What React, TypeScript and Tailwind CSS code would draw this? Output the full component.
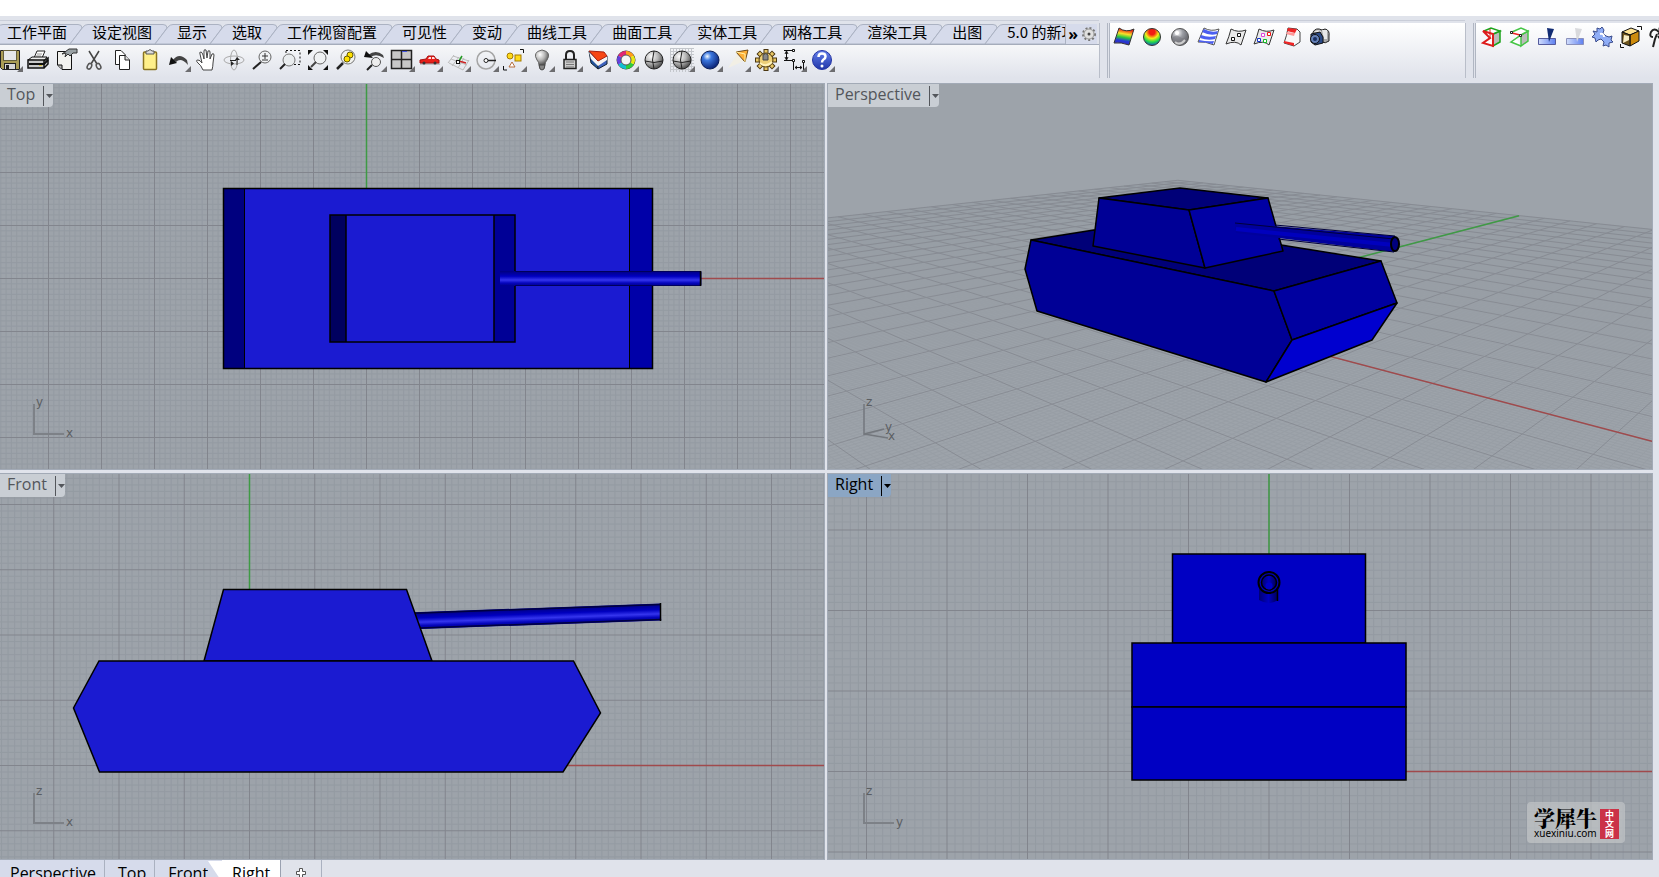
import { Fragment } from 'react';
import type { ReactNode } from 'react';

interface Tool {
  name: string;
  icon: ReactNode;
  flyout?: boolean;
}

interface ViewportProps {
  title: string;
  viewBox: string;
  active?: boolean;
  children: ReactNode;
}

const menuTabs = [
  '工作平面', '设定视图', '显示', '选取', '工作视窗配置', '可见性', '变动',
  '曲线工具', '曲面工具', '实体工具', '网格工具', '渲染工具', '出图', '5.0 的新功能',
];

const gearTeeth = [0, 45, 90, 135, 180, 225, 270, 315];

const shadedSphere = (
  <>
    <circle cx="12" cy="12" r="9" fill="url(#gray-ball)" stroke="#222" />
    <path d="M12 3 Q9 12 12 21 M3 13 Q12 16 21 13" fill="none" stroke="#222" />
  </>
);

const mainTools: Tool[] = [
  {
    name: 'Save', flyout: true, icon: (
      <>
        <path d="M2.500 2.500 H21.500 V21.500 H4.500 L2.500 19.500 Z" fill="#aa9d55" stroke="#222" />
        <rect x="5.500" y="2.500" width="13" height="10" fill="#e5e8ea" stroke="#65603c" />
        <rect x="6.500" y="15.500" width="11" height="6" fill="#d7d7d7" stroke="#222" />
        <rect x="8" y="17" width="3" height="4" fill="#222" />
      </>
    ),
  },
  {
    name: 'Print', icon: (
      <>
        <path d="M8 10 L11 3 H19 L16 10" fill="#fff" stroke="#222" />
        <path d="M11 6 H16 M10 8 H15" stroke="#999" />
        <path d="M2 12 L6 9 H21 L18 13 Z" fill="#eee" stroke="#111" />
        <path d="M2 12 H18 V20 H2 Z M18 13 L22 10 V16 L18 20" fill="#c9c9c9" stroke="#111" strokeWidth="1.500" />
        <path d="M3 16 H18 L22 12" fill="none" stroke="#111" strokeWidth="2" />
        <rect x="13" y="17" width="3" height="1" fill="#d9c541" />
      </>
    ),
  },
  {
    name: 'Document properties', icon: (
      <>
        <path d="M3.500 3.500 H17.500 V21.500 H8 L3.500 17 Z" fill="#f2f2ef" stroke="#111" />
        <path d="M4 17 H8 V21" fill="#bbb" stroke="#111" />
        <path d="M8 6 L15 1 H23 V5 H19 L16 8 L14 6 L11 9 L12 5 Z" fill="#9aa2a5" stroke="#333" />
      </>
    ),
  },
  {
    name: 'Cut', icon: (
      <>
        <path d="M7 3 L15 16 M17 3 L9 16" stroke="#444" strokeWidth="1.500" />
        <ellipse cx="7.500" cy="18" rx="2" ry="3" transform="rotate(30 7 18)" fill="none" stroke="#555" strokeWidth="1.500" />
        <ellipse cx="16.500" cy="18" rx="2" ry="3" transform="rotate(-30 17 18)" fill="none" stroke="#555" strokeWidth="1.500" />
      </>
    ),
  },
  {
    name: 'Copy', icon: (
      <>
        <path d="M5.500 2.500 H11 L15.500 7 V16.500 H5.500 Z" fill="#fff" stroke="#222" />
        <path d="M9.500 7.500 H15 L19.500 12 V21.500 H9.500 Z" fill="#fff" stroke="#222" />
        <path d="M15 7.500 V12 H19.500" fill="#ddd" stroke="#222" />
      </>
    ),
  },
  {
    name: 'Paste', icon: (
      <>
        <rect x="5.500" y="4" width="13" height="17.500" rx="1" fill="#fff08a" stroke="#8a7420" strokeWidth="1.500" />
        <path d="M8 6 V3 H10 Q12 0 14 3 H16 V6 Z" fill="#ddd" stroke="#555" />
      </>
    ),
  },
  {
    name: 'Undo', flyout: true, icon: (
      <>
        <path d="M7 12 Q13 4 21 12 L22 17 Q15 9 10 14" fill="#444" />
        <path d="M3 17 L5 9 L11 15 Z" fill="#111" />
      </>
    ),
  },
  {
    name: 'Pan', icon: (
      <path
        d="M9 22 Q7 17 4 15 Q1 12 4 12 Q6 12 8 15 L6 6 Q5 4 7 4 Q8 4 9 7 L10 11 L10 3 Q10 1 12 2 L13 10 L14 3 Q16 2 16 4 L16 11 L18 6 Q20 5 20 7 L19 15 Q19 18 18 22 Z"
        fill="#fff"
        stroke="#444"
      />
    ),
  },
  {
    name: 'Rotate view', icon: (
      <>
        <ellipse cx="12" cy="12" rx="10" ry="4" fill="none" stroke="#aaa" />
        <ellipse cx="12" cy="12" rx="3.500" ry="10" fill="none" stroke="#aaa" />
        <path d="M8 12.500 H14 M15 12 V17" stroke="#222" />
        <path d="M9 13 L12 15.500 L9 18 Z M13 12 L15 9 L18 12 Z" fill="#222" />
      </>
    ),
  },
  {
    name: 'Zoom', icon: (
      <>
        <circle cx="15" cy="9" r="6" fill="#f0f2f4" stroke="#666" />
        <path d="M11 14 L3 21" stroke="#222" strokeWidth="2" />
        <path d="M12 8 H18 M15 5 V11 M12 12 H18" stroke="#333" />
      </>
    ),
  },
  {
    name: 'Zoom window', icon: (
      <>
        <path d="M8 2.500 H22 V16.500 H14 M8 3 V6" fill="none" stroke="#111" strokeDasharray="2 2" />
        <circle cx="11" cy="12" r="6" fill="#e9ecee" stroke="#777" />
        <path d="M7 16 L2 21" stroke="#222" strokeWidth="2" />
      </>
    ),
  },
  {
    name: 'Zoom extents', icon: (
      <>
        <circle cx="14" cy="10" r="6" fill="#eff1f3" stroke="#666" />
        <path d="M10 14 L5 19" stroke="#444" strokeWidth="2" />
        <path d="M2 2 H7 L2 7 Z M22 2 H17 L22 7 Z M2 22 H7 L2 17 Z M22 22 H17 L22 17 Z" fill="#111" />
      </>
    ),
  },
  {
    name: 'Zoom selected', icon: (
      <>
        <circle cx="14" cy="9" r="7" fill="#f1f1ee" stroke="#777" />
        <path d="M9 15 L3 21" stroke="#222" strokeWidth="2.500" />
        <circle cx="16" cy="7" r="3" fill="#ffe000" stroke="#665b00" />
        <circle cx="13" cy="11" r="3" fill="#ffe000" stroke="#665b00" />
      </>
    ),
  },
  {
    name: 'Undo view change', flyout: true, icon: (
      <>
        <path d="M6 7 Q14 1 21 7 L22 10 Q14 5 9 9" fill="#444" />
        <path d="M2 9 L4 3 L11 10 Z" fill="#111" />
        <circle cx="14" cy="14" r="4.500" fill="#eee" stroke="#555" />
        <path d="M10 17 L5 22" stroke="#222" strokeWidth="2" />
      </>
    ),
  },
  {
    name: 'Four viewports', flyout: true, icon: (
      <>
        <rect x="1.500" y="2.500" width="20" height="18" fill="#c7c7c7" stroke="#222" strokeWidth="1.500" />
        <path d="M11.500 2 V21 M1 11.500 H22" stroke="#222" strokeWidth="1.500" />
        <path d="M12 3.500 H17" stroke="#45d" />
      </>
    ),
  },
  {
    name: 'Display mode', flyout: true, icon: (
      <>
        <path d="M2 16 H22" stroke="#999" />
        <path d="M2 12 L8 11 L10 8 H16 L18 11 L21 12 V15 H2 Z" fill="#e8201a" stroke="#a81010" />
        <path d="M11 9 H13 V11 H10 Z M14 9 H16 L17 11 H14 Z" fill="#fdd" />
        <circle cx="6" cy="15" r="1.500" fill="#333" />
        <circle cx="17" cy="15" r="1.500" fill="#333" />
      </>
    ),
  },
  {
    name: 'Construction plane', flyout: true, icon: (
      <>
        <path d="M7 8 L23 13 M5 11 L21 17 M3 15 L17 22 M8 7 L2 15 M13 9 L6 18 M18 10 L12 20 M23 12 L17 22" stroke="#bbb" />
        <path d="M13 13 L20 15" stroke="#c22" strokeWidth="1.500" />
        <path d="M13 13 L16 8" stroke="#292" strokeWidth="1.500" />
        <rect x="10.500" y="12.500" width="3" height="3" fill="#fff" stroke="#111" />
      </>
    ),
  },
  {
    name: 'Object snap', flyout: true, icon: (
      <>
        <circle cx="12" cy="12" r="9" fill="none" stroke="#a5a5a5" strokeWidth="1.500" />
        <path d="M12 12.500 H22" stroke="#222" strokeWidth="1.500" />
        <circle cx="12" cy="12.500" r="2" fill="#fff" stroke="#222" />
      </>
    ),
  },
  {
    name: 'Selection', flyout: true, icon: (
      <>
        <circle cx="8" cy="8" r="3" fill="#ffda19" stroke="#a57b00" />
        <rect x="13" y="7" width="6" height="6" fill="#ffda19" stroke="#a57b00" />
        <path d="M7 19 L10 14 L13 19 Z" fill="#fff" stroke="#b56d3d" />
        <path d="M18 1.500 H21.500 V5 M1.500 18 V22 H5" fill="none" stroke="#111" />
      </>
    ),
  },
  {
    name: 'Hide', flyout: true, icon: (
      <>
        <path d="M9 17 Q9 14 7 12 Q2 4 12 2 Q22 4 17 12 Q15 14 15 17 Z" fill="url(#gray-ball)" stroke="#666" />
        <path d="M9 17 H15 L14 21 L12 22 L10 21 Z" fill="#888" stroke="#444" />
      </>
    ),
  },
  {
    name: 'Lock', flyout: true, icon: (
      <>
        <path d="M8 12 V7 Q8 3 12 3 Q16 3 16 7 V12" fill="none" stroke="#222" strokeWidth="2" />
        <rect x="6" y="11.500" width="12" height="9" fill="#ccc" stroke="#222" strokeWidth="1.500" />
        <path d="M8 14 H16 M8 16.500 H16 M8 19 H16" stroke="#777" />
      </>
    ),
  },
  {
    name: 'Layers', flyout: true, icon: (
      <>
        <path d="M3 3 L5 15 L12 21 V13 Z" fill="#24549c" stroke="#123" />
        <path d="M12 21 V14 L21 8 V16 Z" fill="#3e62bd" stroke="#123" />
        <path d="M3 4 L12 13 L21 8 V12 L12 18 L5 11 Z" fill="#f4f4f4" />
        <path d="M3 3 L18 4 L21 8 L12 13 Z" fill="#f74714" stroke="#a21" />
      </>
    ),
  },
  {
    name: 'Properties', flyout: true, icon: (
      <>
        <circle cx="12" cy="12" r="9" fill="none" stroke="#333" />
        <g fill="none" strokeWidth="4">
          <path d="M12 5 A7 7 0 0 1 18 8.500" stroke="#ff9c19" />
          <path d="M18 8.500 A7 7 0 0 1 18 15.500" stroke="#e8e815" />
          <path d="M18 15.500 A7 7 0 0 1 12 19" stroke="#2fce38" />
          <path d="M12 19 A7 7 0 0 1 6 15.500" stroke="#12bfd1" />
          <path d="M6 15.500 A7 7 0 0 1 6 8.500" stroke="#6541df" />
          <path d="M6 8.500 A7 7 0 0 1 12 5" stroke="#e22672" />
        </g>
        <circle cx="12" cy="12" r="5" fill="#f5f5f5" stroke="#555" />
      </>
    ),
  },
  { name: 'Shade', icon: shadedSphere },
  {
    name: 'Shade all', flyout: true, icon: (
      <>
        <rect width="24" height="24" fill="url(#dots)" />
        {shadedSphere}
      </>
    ),
  },
  { name: 'Render', flyout: true, icon: <circle cx="12" cy="12" r="9" fill="url(#blue-ball)" stroke="#0a1d56" /> },
  {
    name: 'Spotlight', flyout: true, icon: (
      <>
        <path d="M2 20 L12 5 L18 13 Z" fill="#f2efe5" />
        <path d="M10 4 L22 2 L19 14 Z" fill="#ffaf35" stroke="#6e4a18" />
        <path d="M10 4 L19 6 L19 14" fill="none" stroke="#fff0a8" />
      </>
    ),
  },
  {
    name: 'Options', flyout: true, icon: (
      <>
        <g fill="#e8c765" stroke="#4b3711">
          {gearTeeth.map((angle) => (
            <rect key={angle} x="10" y="1.500" width="4" height="6" transform={`rotate(${angle} 12 12)`} />
          ))}
          <circle cx="12" cy="12" r="7" />
        </g>
        <circle cx="12" cy="12" r="6" fill="#edcf78" />
        <path d="M9 7 Q12 4 14 7 V12 H9 Z" fill="#888" stroke="#444" />
        <path d="M6 15 Q12 20 18 14" fill="none" stroke="#fff3bd" strokeWidth="2" />
      </>
    ),
  },
  {
    name: 'Dimension', flyout: true, icon: (
      <>
        <path d="M2 2.500 H12 M4.500 4 V11 M2 12.500 H11.500 V22 M21.500 13 V22 M13 19.500 H20" fill="none" stroke="#111" />
        <path d="M3 6 L4.500 3 L6 6 M3 9 L4.500 12 L6 9 M15 18 L13 19.500 L15 21 M18 18 L20 19.500 L18 21" fill="none" stroke="#111" />
        <path d="M10.500 1.500 H12.500 V3.500 H10.500 Z M10.500 11.500 H12.500 V13.500 H10.500 Z M20.500 12.500 H22.500 V14.500 H20.500 Z" fill="#fff" stroke="#111" />
      </>
    ),
  },
  {
    name: 'Help', flyout: true, icon: (
      <>
        <circle cx="12" cy="12" r="9.500" fill="url(#help-ball)" stroke="#2434a4" />
        <path d="M8.500 9 Q8.500 5.500 12 5.500 Q15.500 5.500 15.500 8.500 Q15.500 10.500 13.500 11.500 Q12 12.500 12 14.500" fill="none" stroke="#fff" strokeWidth="2.500" />
        <circle cx="12" cy="18" r="1.500" fill="#fff" />
      </>
    ),
  },
];

const sheet = 'M7 4 Q14 8 22 5 L17 20 Q12 15 2 19 Q5 12 7 4 Z';

const analysisTools: Tool[] = [
  {
    name: 'Curvature analysis',
    icon: <path d="M7 3 Q14 8 22 4 L17 20 Q9 17 2 18 Z" fill="url(#rainbow)" stroke="#333" />,
  },
  { name: 'Draft angle', icon: <circle cx="12" cy="12" r="8.500" fill="url(#heat-ball)" stroke="#333" /> },
  {
    name: 'Environment map', icon: (
      <>
        <circle cx="12" cy="12" r="8.500" fill="url(#chrome)" stroke="#555" />
        <path d="M4 13 Q8 9 12 12 T20 11 Q19 18 14 20 Q7 19 4 13 Z" fill="#77787e" opacity="0.5" />
        <path d="M7 17 Q12 21 17 15" fill="none" stroke="#ccc" strokeWidth="2" />
        <circle cx="9" cy="8" r="2" fill="#fff" />
      </>
    ),
  },
  {
    name: 'Zebra', icon: (
      <>
        <path d="M8 3 Q15 7 23 4 L18 20 Q9 16 2 17 Z" fill="#fff" stroke="#555" />
        <path d="M8 4 Q15 8 22 6 L21 9 Q14 11 6 7 Z M5 10 Q12 13 20 11 L19 14 Q12 16 4 13 Z M3 15 Q12 17 18 16 L17 19 Q9 17 3 17 Z" fill="#4c5ff0" />
      </>
    ),
  },
  {
    name: 'Edit points', icon: (
      <>
        <path d={sheet} fill="#eaeaea" stroke="#333" />
        <path d="M7.500 12.500 H10.500 V15.500 H7.500 Z M13.500 8.500 H16.500 V11.500 H13.500 Z" fill="#fff" stroke="#111" />
      </>
    ),
  },
  {
    name: 'Point deviation', icon: (
      <>
        <path d={sheet} fill="#eaeaea" stroke="#333" />
        <g fill="#fff">
          <path d="M9.500 8.500 H12.500 V11.500 H9.500 Z" stroke="#d4d" />
          <path d="M15.500 7.500 H18.500 V10.500 H15.500 Z" stroke="#e11" />
          <path d="M5.500 13.500 H8.500 V16.500 H5.500 Z" stroke="#13c" />
          <path d="M11.500 14.500 H14.500 V17.500 H11.500 Z" stroke="#1b2" />
        </g>
      </>
    ),
  },
  {
    name: 'Thickness', icon: (
      <>
        <path d="M8 3 L17 4 L20 7 V17 L14 21 L4 18 Q7 10 8 3 Z" fill="#f8f8f8" stroke="#444" />
        <path d="M8 3 L17 4 L15 8 L7 6 Z M4 16 L14 18 V21 L4 18 Z" fill="#ee2525" />
        <path d="M7 7 L15 8 L14 11 L6 9 Z" fill="#ff9a9a" />
      </>
    ),
  },
  {
    name: 'Capture', icon: (
      <>
        <path d="M5 7 Q8 2 14 5 L17 4 Q22 5 21 11 V16 Q17 19 14 17 L5 15 Z" fill="#aaa" stroke="#222" />
        <path d="M6 7 Q9 4 13 6 L12 8 Z M14 5 H19 V14 H16 Z" fill="#e8e8e8" />
        <path d="M3 9 L12 7 L15 12 V18 L7 20 L3 17 Z" fill="#2c4a86" stroke="#111" />
        <circle cx="7" cy="14" r="4.500" fill="#6480b7" stroke="#111" />
        <circle cx="7" cy="14" r="2" fill="#172d60" />
      </>
    ),
  },
];

const solidTools: Tool[] = [
  {
    name: 'Cap holes', icon: (
      <>
        <path d="M14 9 L21 6 V17 L14 21 Z" fill="#bbb" stroke="#1aa31a" strokeWidth="1.500" />
        <path d="M5 6 L12 3 L21 6 L14 9" fill="#fff" stroke="#1aa31a" strokeWidth="1.500" />
        <path d="M14 9 V21 L4 18 L11 13 L4 6 Z" fill="#fff" stroke="#dd1c1c" strokeWidth="2" />
        <path d="M11 13 V4" stroke="#dd1c1c" />
      </>
    ),
  },
  {
    name: 'Move edge', icon: (
      <>
        <path d="M14 10 L21 6 V16 L14 21 Z" fill="#bbb" stroke="#45c545" strokeWidth="1.500" />
        <path d="M5 7 L14 3 L21 6 L14 10 L4 17 L14 21" fill="#fff" stroke="#45c545" strokeWidth="1.500" />
        <path d="M5 8 L13 10" stroke="#e22" strokeWidth="1.500" />
        <path d="M3.500 6.500 H5.500 V8.500 H3.500 Z M12.500 9.500 H14.500 V11.500 H12.500 Z" fill="#fff" stroke="#222" />
      </>
    ),
  },
  {
    name: 'Boolean split', icon: (
      <>
        <path d="M3.500 13.500 H20.500 V19.500 H3.500 Z" fill="url(#slab)" stroke="#555b9c" />
        <path d="M12 3 L19 4 L14 17 Z" fill="#122c73" />
      </>
    ),
  },
  {
    name: 'Boolean difference', icon: (
      <>
        <path d="M3.500 13.500 H20.500 V19.500 H3.500 Z" fill="url(#slab)" stroke="#8a90bb" />
        <path d="M12 3 L19 4 L14 17 Z" fill="#d9dadd" />
      </>
    ),
  },
  {
    name: 'Union', icon: (
      <>
        <path
          d="M6 3 L9 4 L11 2 L13 5 L12 8 L15 11 L18 12 L21 11 L20 15 L22 17 L18 18 L18 22 L15 20 L12 21 L13 17 L10 14 L7 15 L5 17 L4 13 L1 12 L4 9 L2 6 L6 7 Z"
          fill="#8fadf6"
          stroke="#3b4c8c"
        />
        <path d="M9 9 Q13 8 13 12" fill="none" stroke="#fff" strokeWidth="2" />
      </>
    ),
  },
  {
    name: 'Extract surface', icon: (
      <>
        <path d="M3 7 L12 3 L20 6 L11 10 Z" fill="#ffe391" stroke="#111" />
        <path d="M11 10 L20 6 V16 L11 21 Z" fill="#cd8b0d" stroke="#111" />
        <path d="M3 7 L11 10 V21 L3 18 Z" fill="#6e551c" stroke="#111" />
        <path d="M5 10 L10 11 V15 L4 18 Z" fill="#f8ecc3" />
        <path d="M18 1.500 H22.500 V5 M1.500 19 V22.500 H5" fill="none" stroke="#111" />
      </>
    ),
  },
  {
    name: 'Walk about', icon: (
      <>
        <circle cx="14" cy="4" r="2.500" fill="#111" />
        <path d="M12 7 Q7 2 4 7 Q2 12 6 12 M10 9 L8 14 L6 22 M11 11 L14 15 V22 M11 8 L16 12 L20 10" fill="none" stroke="#222" strokeWidth="2" />
      </>
    ),
  },
];

function Toolbar({ label, tools }: { label: string; tools: Tool[] }) {
  return (
    <div role="toolbar" aria-label={label} className="flex">
      {tools.map((tool) => (
        <button key={tool.name} type="button" aria-label={tool.name} className="relative flex h-7 w-7 shrink-0 items-center justify-center">
          <svg className="h-6 w-6 overflow-visible" viewBox="0 0 24 24">
            {tool.icon}
            {tool.flyout && <path d="M25 18 V24 H19 Z" fill="#6d6d70" />}
          </svg>
        </button>
      ))}
    </div>
  );
}

// A tab leans over its left neighbour; CJK glyphs are 15px wide each.
function MenuTab({ text }: { text: string }) {
  const width = text.length * 15 + 25;
  return (
    <button type="button" className="relative h-5 shrink-0 whitespace-pre pb-1 pl-[22px] pr-[3px] text-[15px] leading-4">
      <svg className="absolute left-0 top-0 h-5 w-full overflow-visible">
        <path
          d={`M0 20 L13 3 Q15 0.500 18 0.500 H${width + 8} Q${width + 12} 0.500 ${width + 12} 4 L${width} 20 Z`}
          fill="#d6dbeb"
          stroke="#abb2c2"
        />
      </svg>
      <span className="relative">{text}</span>
    </button>
  );
}

function OrthoGrid({ x, y, step }: { x: number; y: number; step: number }) {
  let minor = '';
  let major = '';
  for (let i = -200; i <= 200; i++) {
    const d = (i * step) / 10;
    const line = `M${x + d} 0 V877 M0 ${y + d} H1659 `;
    if (i % 10 === 0) major += line;
    else minor += line;
  }
  return (
    <>
      <path d={minor} stroke="#8f969e" strokeWidth="1" opacity="0.6" />
      <path d={major} stroke="#82858d" strokeWidth="1" />
    </>
  );
}

// Ground plane projection: the origin plus the two vanishing points.
const ALPHA = 0.7188 / 20;
const BETA = 0.7726 / 20;
const depth = (x: number, y: number) => 1 - ALPHA * x + BETA * y;
const project = (x: number, y: number) => {
  const w = depth(x, y);
  const sx = (1156 - ALPHA * x * 334 + BETA * y * 1991) / w;
  const sy = (310.5 - ALPHA * x * 93 + BETA * y * 93) / w;
  return `${sx.toFixed(2)} ${sy.toFixed(2)}`;
};

function PerspectiveGrid() {
  let minor = '';
  let major = '';
  const near = 0.5;
  for (let i = -200; i <= 200; i++) {
    const k = i / 10;
    const maxX = Math.min(20, (1 + BETA * k - near) / ALPHA);
    const minY = Math.max(-20, (near - 1 + ALPHA * k) / BETA);
    const line = `M${project(-20, k)} L${project(maxX, k)} M${project(k, 20)} L${project(k, minY)} `;
    if (i % 10 === 0) major += line;
    else minor += line;
  }
  return (
    <>
      <path d={minor} stroke="#858c94" opacity="0.2" />
      <path d={major} stroke="#7f828a" opacity="0.65" />
    </>
  );
}

function AxisIcon({ x, y, up, right }: { x: number; y: number; up: string; right: string }) {
  return (
    <g fill="#5b5e62" fontFamily="DejaVu Sans, sans-serif" fontSize="12">
      <path d={`M${x} ${y - 30} V${y} H${x + 30}`} fill="none" stroke="#7d8187" strokeWidth="2" />
      <text x={x + 2} y={y - 28}>{up}</text>
      <text x={x + 32} y={y + 3}>{right}</text>
    </g>
  );
}

function Viewport({ title, viewBox, active, children }: ViewportProps) {
  return (
    <section className="relative min-h-0 min-w-0 overflow-hidden border border-[#a2aab6] bg-[#9da3aa]">
      <svg className="absolute inset-0 h-full w-full" viewBox={viewBox} preserveAspectRatio="xMinYMin slice">
        {children}
      </svg>
      <button
        type="button"
        className={`relative flex h-[23px] items-center rounded-br-[4px] pl-[7px] text-base leading-5 ${
          active ? 'bg-[#8ba6c4] text-black' : 'bg-[#c9ced4] text-[#53565b]'
        }`}
      >
        <span className="pb-[3px] pr-2">{title}</span>
        <span className="flex h-5 w-[10px] items-center justify-end border-l border-current">
          <svg className="h-1 w-[7px]" viewBox="0 0 7 4"><path d="M0 0 H7 L3.500 4 Z" fill="currentColor" /></svg>
        </span>
      </button>
    </section>
  );
}

function Divider() {
  return (
    <div className="flex w-[11px] shrink-0 justify-between border-l border-[#b9bec9]">
      <span />
      <span className="w-[3px] border-x border-[#b0b6c2]" />
    </div>
  );
}

function Defs() {
  return (
    <svg className="absolute h-0 w-0" aria-hidden="true">
      <defs>
        <radialGradient id="gray-ball" cx="0.35" cy="0.3" r="0.75">
          <stop offset="0" stopColor="#fff" />
          <stop offset="0.5" stopColor="#b5b5b5" />
          <stop offset="1" stopColor="#444" />
        </radialGradient>
        <radialGradient id="blue-ball" cx="0.35" cy="0.3" r="0.75">
          <stop offset="0" stopColor="#f4fbff" />
          <stop offset="0.3" stopColor="#3c78e0" />
          <stop offset="1" stopColor="#071d70" />
        </radialGradient>
        <linearGradient id="help-ball" x2="0" y2="1">
          <stop offset="0" stopColor="#6580ec" />
          <stop offset="1" stopColor="#2036a8" />
        </linearGradient>
        <radialGradient id="heat-ball" cx="0.5" cy="0.2" r="0.85">
          <stop offset="0.2" stopColor="#f21c13" />
          <stop offset="0.45" stopColor="#f5ed16" />
          <stop offset="0.7" stopColor="#21d94a" />
          <stop offset="1" stopColor="#1535dd" />
        </radialGradient>
        <radialGradient id="chrome" cx="0.35" cy="0.25" r="0.8">
          <stop offset="0" stopColor="#fff" />
          <stop offset="0.4" stopColor="#9a9ca3" />
          <stop offset="1" stopColor="#55565c" />
        </radialGradient>
        <linearGradient id="rainbow" x1="0.6" x2="0.4" y1="0" y2="1">
          <stop offset="0.1" stopColor="#ee2612" />
          <stop offset="0.35" stopColor="#f7e12a" />
          <stop offset="0.55" stopColor="#29c83d" />
          <stop offset="0.75" stopColor="#2638d8" />
          <stop offset="1" stopColor="#3a2cae" />
        </linearGradient>
        <linearGradient id="slab">
          <stop offset="0" stopColor="#d2defc" />
          <stop offset="1" stopColor="#5d7ff0" />
        </linearGradient>
        <linearGradient id="barrel" x2="0" y2="1">
          <stop offset="0" stopColor="#000080" />
          <stop offset="0.35" stopColor="#0000c0" />
          <stop offset="0.6" stopColor="#3535ee" />
          <stop offset="0.8" stopColor="#0505bd" />
          <stop offset="1" stopColor="#00008a" />
        </linearGradient>
        <linearGradient id="muzzle-shade">
          <stop offset="0" stopColor="#000070" />
          <stop offset="0.5" stopColor="#0000c0" />
          <stop offset="1" stopColor="#000050" />
        </linearGradient>
        <pattern id="dots" width="3" height="3" patternUnits="userSpaceOnUse">
          <rect width="1" height="3" fill="#c4c7cc" />
          <rect width="3" height="1" fill="#c4c7cc" />
        </pattern>
      </defs>
    </svg>
  );
}

const sheets = [
  { name: 'Perspective', style: 'border-r border-[#aab1c0] bg-[#d6dbeb] pl-[10px] pr-2' },
  { name: 'Top', style: 'border-r border-[#aab1c0] bg-[#d6dbeb] pl-[13px] pr-2' },
  { name: 'Front', style: 'bg-[#d6dbeb] pl-[13px]' },
  { name: 'Right', style: 'border-r border-[#9aa1b0] bg-white px-[10px]' },
];

export default function App() {
  return (
    <div className="flex h-screen flex-col overflow-hidden bg-[#e0e3eb] font-['Open_Sans','Noto_Sans_CJK_SC',sans-serif] text-black">
      <Defs />
      <div className="h-4 shrink-0 bg-white" />
      <header className="flex h-[67px] shrink-0 items-start border-t-4 border-[#e0e3eb] pb-[5px]">
        <div className="flex min-w-0 flex-[1098] flex-col self-stretch border-t border-[#c9cdd8]">
          <div className="flex h-6 border-b border-[#a5acbb] pr-[2px] pt-[3px]">
            <nav className="-ml-[15px] flex min-w-0 flex-1 overflow-hidden font-['Noto_Sans_CJK_SC',sans-serif]">
              {menuTabs.map((tab) => (
                <MenuTab key={tab} text={tab} />
              ))}
            </nav>
            <button type="button" aria-label="More tabs" className="h-5 w-4 border-l border-[#abb2c2] bg-[#d6dbeb] text-base font-bold leading-4">»</button>
            <button type="button" aria-label="Tab settings" className="h-5 w-4 bg-[#d6dbeb]">
              <svg className="h-4 w-4" viewBox="0 0 16 16">
                <circle cx="8" cy="8" r="6" fill="#ddd" stroke="#777" strokeWidth="2" strokeDasharray="2 2" />
                <circle cx="8" cy="8" r="5" fill="#e0e0df" stroke="#999" />
                <circle cx="8" cy="8" r="1.500" fill="#444" />
              </svg>
            </button>
          </div>
          <div className="-ml-1 flex-1 bg-linear-to-b from-[#f6f7f9] to-[#e0e3eb] pt-px">
            <Toolbar label="Standard" tools={mainTools} />
          </div>
        </div>
        <div className="flex self-stretch pt-[3px]"><Divider /></div>
        <div className="flex min-w-0 flex-[355] self-stretch border-t border-[#c9cdd8] pt-[2px]">
          <div className="flex-1 bg-linear-to-b from-white to-[#e0e3eb]">
            <Toolbar label="Surface analysis" tools={analysisTools} />
          </div>
        </div>
        <div className="flex self-stretch pt-[3px]"><Divider /></div>
        <div className="flex min-w-0 flex-[183] self-stretch overflow-hidden border-t border-[#c9cdd8] pt-[2px]">
          <div className="min-w-0 flex-1 bg-linear-to-b from-white to-[#e0e3eb] pl-px">
            <Toolbar label="Solid tools" tools={solidTools} />
          </div>
        </div>
      </header>

      <main className="-ml-px mr-[6px] grid min-h-0 flex-1 grid-cols-2 grid-rows-2 gap-x-[2px] gap-y-[3px]">
        <Viewport title="Top" viewBox="0 84 824 385">
          <OrthoGrid x={366.5} y={278.5} step={53} />
          <path d="M366.500 0 V278" stroke="#3f9a45" strokeWidth="1.500" />
          <path d="M366 278.500 H1659" stroke="#a04a4c" strokeWidth="1.500" />
          <rect x="223.500" y="188.500" width="429" height="180" fill="#1b1bd1" />
          <rect x="223.500" y="188.500" width="21" height="180" fill="#00007f" stroke="#000" />
          <rect x="629.500" y="188.500" width="23" height="180" fill="#0000a8" stroke="#000" />
          <rect x="223.500" y="188.500" width="429" height="180" fill="none" stroke="#000" strokeWidth="1.500" />
          <rect x="330" y="215" width="16" height="127" fill="#00005f" />
          <rect x="494" y="215" width="21" height="127" fill="#000096" />
          <path d="M346 215 V342 M494 215 V342" stroke="#000" strokeWidth="1.500" />
          <rect x="330" y="215" width="185" height="127" fill="none" stroke="#000" strokeWidth="1.500" />
          <rect x="500" y="271" width="201" height="15" fill="url(#barrel)" />
          <path d="M515 271.500 H701 V285.500 H515" fill="none" stroke="#00005c" />
          <path d="M700.500 271 V286" stroke="#000" strokeWidth="1.500" />
          <AxisIcon x={34} y={434} up="y" right="x" />
        </Viewport>

        <Viewport title="Perspective" viewBox="828 84 824 385">
          <PerspectiveGrid />
          <path d="M1156 310.500 L1519 215.700" stroke="#3f9a45" strokeWidth="1.500" />
          <path d="M1156 310.500 L1670 446" stroke="#a04a4c" strokeWidth="1.500" />
          <g stroke="#000" strokeWidth="1.500" strokeLinejoin="round">
            <path d="M1031 240 L1094 230 L1281 245 L1381 261 L1274 291 Z" fill="#000078" />
            <path d="M1031 240 L1274 291 L1292 340 L1266 382 L1037 311 L1025 269 Z" fill="#000096" />
            <path d="M1274 291 L1381 261 L1397 303 L1292 340 Z" fill="#0000a0" />
            <path d="M1292 340 L1397 303 L1372 340 L1266 382 Z" fill="#0000cf" />
            <path d="M1099 198 L1180 188 L1268 198 L1189 210 Z" fill="#000078" />
            <path d="M1099 198 L1189 210 L1205 268 L1093 246 Z" fill="#000096" />
            <path d="M1189 210 L1268 198 L1283 251 L1205 268 Z" fill="#0000a4" />
          </g>
          <path d="M1235 223 L1395 236 L1395 252 L1236 233 Z" fill="#00009c" />
          <path d="M1236 229 L1394 245" stroke="#0000be" strokeWidth="4" />
          <path d="M1235 223 L1394 239 M1275 225 L1395 236 M1278 239 L1394 252" stroke="#00003c" />
          <ellipse cx="1395" cy="244" rx="4" ry="7" fill="#00007d" stroke="#000" strokeWidth="2" />
          <g fill="#5b5e62" fontFamily="DejaVu Sans, sans-serif" fontSize="12">
            <path d="M864 404 V434 L884 429 M864 434 L888 438" fill="none" stroke="#73777d" strokeWidth="1.500" />
            <text x="866" y="406">z</text>
            <text x="885" y="431">y</text>
            <text x="888" y="440">x</text>
          </g>
        </Viewport>

        <Viewport title="Front" viewBox="0 474 824 385">
          <OrthoGrid x={249.5} y={765.5} step={65.25} />
          <path d="M249.500 0 V765" stroke="#3f9a45" strokeWidth="1.500" />
          <path d="M249 765.500 H1659" stroke="#a04a4c" strokeWidth="1.500" />
          <g transform="rotate(-2 420 620)">
            <rect x="414" y="612" width="247" height="17" fill="url(#barrel)" />
            <path d="M414 613 H661 M414 628 H661" stroke="#000040" strokeWidth="1.500" />
          </g>
          <path d="M660.500 603 V621" stroke="#000" strokeWidth="1.500" />
          <g fill="#1b1bd1" stroke="#000" strokeWidth="1.500">
            <path d="M223.500 589.500 H406.500 L432 661 H204 Z" />
            <path d="M99 661 H573.500 L600.500 713 L563 772 H99.500 L73.500 708 Z" />
          </g>
          <AxisIcon x={34} y={823} up="z" right="x" />
        </Viewport>

        <Viewport title="Right" viewBox="828 474 824 385" active>
          <OrthoGrid x={1269} y={771.5} step={80.5} />
          <path d="M1269 0 V771" stroke="#3f9a45" strokeWidth="1.500" />
          <path d="M1269 771.500 H1659" stroke="#a04a4c" strokeWidth="1.500" />
          <g fill="#0000c3" stroke="#000" strokeWidth="1.500">
            <rect x="1172.500" y="554" width="193" height="89" />
            <rect x="1132" y="643" width="274" height="64" />
            <rect x="1132" y="707" width="274" height="73" />
          </g>
          <path d="M1259 586 V600 Q1269 606 1278 600 V586 Z" fill="url(#muzzle-shade)" />
          <path d="M1277.500 588 V601" stroke="#000" strokeWidth="1.500" />
          <circle cx="1269" cy="582.500" r="10.500" fill="#0000b4" stroke="#000" strokeWidth="2" />
          <circle cx="1269" cy="582.500" r="7.500" fill="url(#muzzle-shade)" stroke="#000" strokeWidth="1.500" />
          <circle cx="1269" cy="586" r="3.500" fill="#0000c8" />
          <AxisIcon x={864} y={823} up="z" right="y" />
          <rect x="1527" y="802" width="98" height="41" rx="4" fill="#c4c7ca" opacity="0.65" />
          <text x="1534" y="826" fontFamily="Noto Serif CJK SC, Noto Sans CJK SC, serif" fontWeight="900" fontSize="21">学犀牛</text>
          <text x="1534" y="837" fontFamily="Noto Sans, sans-serif" fontSize="10">xuexiniu.com</text>
          <rect x="1600" y="809" width="19" height="30" fill="#cb3247" />
          <g fill="#fff" fontFamily="Noto Sans CJK SC, sans-serif" fontWeight="700" fontSize="9" textAnchor="middle">
            <text x="1609.500" y="818">中</text>
            <text x="1609.500" y="827">文</text>
            <text x="1609.500" y="837">网</text>
          </g>
        </Viewport>
      </main>

      <footer className="flex h-[17px] shrink-0 items-start overflow-hidden text-base leading-[26px]">
        {sheets.map((tab) => (
          <Fragment key={tab.name}>
            {tab.name === 'Right' && (
              <svg className="h-[26px] w-[14px] bg-[#d6dbeb]" viewBox="0 0 14 26"><path d="M0 1 H14 V22 Z" fill="#fff" /></svg>
            )}
            <button type="button" className={`h-[26px] ${tab.style}`}>{tab.name}</button>
          </Fragment>
        ))}
        <button type="button" aria-label="Add sheet" className="flex h-[26px] w-[41px] justify-center border-r border-[#aab1c0] pt-2">
          <svg className="h-[10px] w-[10px]" viewBox="0 0 10 10"><path d="M3.500 0.500 H6.500 V3.500 H9.500 V6.500 H6.500 V9.500 H3.500 V6.500 H0.500 V3.500 H3.500 Z" fill="#fff" stroke="#555" /></svg>
        </button>
      </footer>
    </div>
  );
}
